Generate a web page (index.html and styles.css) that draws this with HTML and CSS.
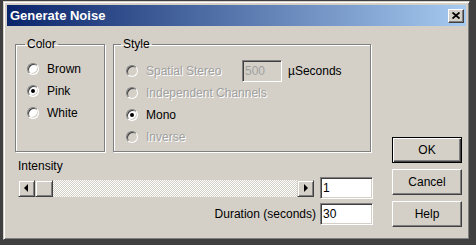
FILE: index.html
```html
<!DOCTYPE html>
<html lang="en">
<head>
    <meta charset="UTF-8">
    <title>Generate Noise</title>
    <link rel="stylesheet" href="styles.css">
</head>
<body>
    <div class="window">
        <div class="titlebar">
            <span class="title">Generate Noise</span>
            <button class="close-btn">
                <svg width="8" height="7" viewBox="0 0 8 7"><path d="M0.5 0.5 L7.5 6.5 M7.5 0.5 L0.5 6.5" stroke="#000" stroke-width="1.8"/></svg>
            </button>
        </div>

        <div class="content">
            <div class="main">
                <div class="groups">
                    <fieldset class="group color-group">
                        <legend>Color</legend>
                        <label class="radio"><span class="dot"></span>Brown</label>
                        <label class="radio checked"><span class="dot"></span>Pink</label>
                        <label class="radio"><span class="dot"></span>White</label>
                    </fieldset>

                    <fieldset class="group style-group">
                        <legend>Style</legend>
                        <div class="option-row">
                            <label class="radio disabled stereo"><span class="dot"></span>Spatial Stereo</label>
                            <input class="field small-field" type="text" value="500" disabled>
                            <span class="unit">µSeconds</span>
                        </div>
                        <label class="radio disabled"><span class="dot"></span>Independent Channels</label>
                        <label class="radio checked"><span class="dot"></span>Mono</label>
                        <label class="radio disabled"><span class="dot"></span>Inverse</label>
                    </fieldset>
                </div>

                <div class="intensity-label">Intensity</div>
                <div class="field-row">
                    <div class="scrollbar">
                        <span class="sb-btn"><span class="arrow-left"></span></span>
                        <span class="sb-thumb"></span>
                        <span class="sb-track"></span>
                        <span class="sb-btn"><span class="arrow-right"></span></span>
                    </div>
                    <input class="field" type="text" value="1">
                </div>
                <div class="field-row">
                    <span class="field-label">Duration (seconds)</span>
                    <input class="field" type="text" value="30">
                </div>
            </div>

            <div class="buttons">
                <button class="btn default-btn">OK</button>
                <button class="btn">Cancel</button>
                <button class="btn">Help</button>
            </div>
        </div>
    </div>
</body>
</html>
```

FILE: styles.css
```css
body {
    margin: 0;
    height: 245px;
    background-color: #404040;
    font-family: "Liberation Sans", Arial, sans-serif;
    font-size: 12px;
    color: #000;
    overflow: hidden;
}
.window {
    box-sizing: border-box;
    width: 467px;
    height: 239px;
    margin: 1px 0 0 3px;
    padding: 3px;
    background-color: #d4d0c8;
    border: 1px solid;
    border-color: #d4d0c8 #404040 #404040 #d4d0c8;
    box-shadow: inset 1px 1px 0 #fff, inset -1px -1px 0 #808080;
    display: flex;
    flex-direction: column;
}
.titlebar {
    height: 21px;
    display: flex;
    align-items: center;
    justify-content: space-between;
    padding: 0 2px 0 3px;
    background: linear-gradient(to right, #0a246a, #a6caf0);
}
.title {
    color: #fff;
    font-weight: bold;
    font-size: 13px;
}
.close-btn {
    box-sizing: border-box;
    width: 16px;
    height: 14px;
    padding: 0;
    display: flex;
    align-items: center;
    justify-content: center;
    background-color: #d4d0c8;
    border: 1px solid;
    border-color: #fff #404040 #404040 #fff;
    box-shadow: inset -1px -1px 0 #808080;
}
.content {
    flex: 1;
    display: flex;
    padding: 11px 4px 9px 8px;
}
.main {
    width: 358px;
    display: flex;
    flex-direction: column;
}
.groups {
    display: flex;
    gap: 8px;
}
.group {
    box-sizing: border-box;
    height: 115px;
    margin: 0;
    padding: 0;
    min-width: 0;
    border: 1px solid #808080;
    box-shadow: 1px 1px 0 #fff, inset 1px 1px 0 #fff;
    display: flex;
    flex-direction: column;
}
.group legend {
    padding: 0 2px;
    line-height: 14px;
}
.color-group {
    width: 90px;
    padding: 7px 0 0 11px;
}
.color-group legend {
    margin-left: -2px;
}
.style-group {
    width: 258px;
    padding: 9px 0 0 12px;
}
.style-group legend {
    margin-left: -5px;
}
.radio {
    height: 22px;
    display: flex;
    align-items: center;
    gap: 8px;
}
.dot {
    box-sizing: border-box;
    width: 12px;
    height: 12px;
    border-radius: 50%;
    border: 1px solid;
    border-color: #808080 #fff #fff #808080;
    background-color: #fff;
    box-shadow: inset 1px 1px 0 #404040, inset -1px -1px 0 #d4d0c8;
    display: flex;
    align-items: center;
    justify-content: center;
}
.checked .dot::after {
    content: "";
    width: 4px;
    height: 4px;
    border-radius: 50%;
    background-color: #000;
}
.disabled {
    color: #a0a0a0;
    text-shadow: 1px 1px 0 #fff;
}
.disabled .dot {
    background-color: #d4d0c8;
}
.option-row {
    display: flex;
    align-items: center;
    height: 22px;
}
.stereo {
    width: 116px;
}
.unit {
    margin-left: 6px;
}
.field {
    box-sizing: border-box;
    width: 53px;
    height: 22px;
    margin: 0;
    padding: 0 2px;
    font: inherit;
    color: #000;
    background-color: #fff;
    border: 1px solid;
    border-color: #808080 #fff #fff #808080;
    box-shadow: inset 1px 1px 0 #404040, inset -1px -1px 0 #d4d0c8;
    outline: none;
}
.small-field {
    width: 40px;
    background-color: #d4d0c8;
    color: #a0a0a0;
}
.intensity-label {
    margin: 7px 0 0 3px;
    line-height: 14px;
}
.field-row {
    display: flex;
    align-items: center;
    justify-content: flex-end;
    gap: 4px;
    margin-top: 4px;
    padding-left: 3px;
}
.scrollbar {
    flex: 1;
    height: 17px;
    display: flex;
    margin-right: 2px;
}
.sb-btn,
.sb-thumb {
    box-sizing: border-box;
    width: 17px;
    height: 17px;
    background-color: #d4d0c8;
    border: 1px solid;
    border-color: #d4d0c8 #404040 #404040 #d4d0c8;
    box-shadow: inset 1px 1px 0 #fff, inset -1px -1px 0 #808080;
    display: flex;
    align-items: center;
    justify-content: center;
}
.sb-thumb {
    width: 18px;
}
.sb-track {
    flex: 1;
    background: repeating-conic-gradient(#fff 0 25%, #d4d0c8 0 50%) 0 0 / 2px 2px;
}
.arrow-left {
    border-top: 4px solid transparent;
    border-bottom: 4px solid transparent;
    border-right: 4px solid #000;
    margin-left: -1px;
}
.arrow-right {
    border-top: 4px solid transparent;
    border-bottom: 4px solid transparent;
    border-left: 4px solid #000;
}
.buttons {
    margin-left: 19px;
    width: 70px;
    display: flex;
    flex-direction: column;
    justify-content: flex-end;
    gap: 6px;
}
.btn {
    box-sizing: border-box;
    width: 70px;
    height: 26px;
    padding: 0;
    font: inherit;
    background-color: #d4d0c8;
    border: 1px solid;
    border-color: #fff #404040 #404040 #fff;
    box-shadow: inset -1px -1px 0 #808080;
}
.default-btn {
    border: 1px solid #000;
    box-shadow: inset 1px 1px 0 #fff, inset -1px -1px 0 #404040, inset -2px -2px 0 #808080;
}
```
